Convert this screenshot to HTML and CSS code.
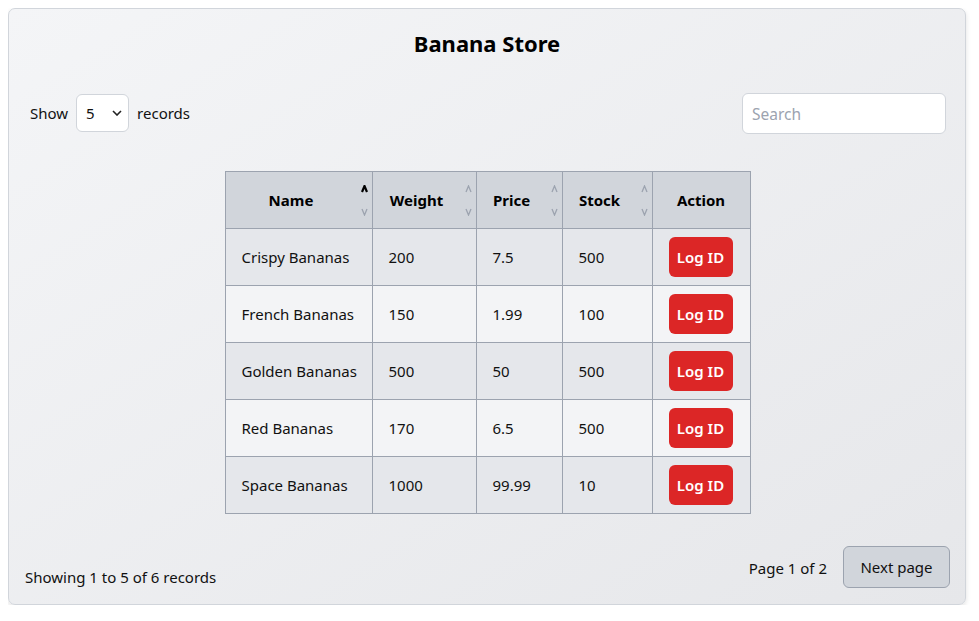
FILE: index.html
```html
<!DOCTYPE html>
<html lang="en">
<head>
<meta charset="utf-8">
<title>Banana Store</title>
<link rel="stylesheet" href="styles.css">
</head>
<body>
<div class="card">
  <h1 class="title">Banana Store</h1>
  <div class="controls">
    <label class="show">
      <span>Show</span>
      <select class="select">
        <option>5</option>
        <option>10</option>
      </select>
      <span>records</span>
    </label>
    <input class="search" type="text" placeholder="Search">
  </div>
  <div class="table-wrap">
  <table class="table">
    <colgroup>
      <col class="c-name"><col class="c-weight"><col class="c-price"><col class="c-stock"><col class="c-action">
    </colgroup>
    <thead>
      <tr>
        <th class="sortable">Name<span class="sort"><svg class="up active" viewBox="0 0 7 8"><polyline points="1,7 3.5,1 6,7"/></svg><svg class="down" viewBox="0 0 7 8"><polyline points="1,1 3.5,7 6,1"/></svg></span></th>
        <th class="sortable">Weight<span class="sort"><svg class="up" viewBox="0 0 7 8"><polyline points="1,7 3.5,1 6,7"/></svg><svg class="down" viewBox="0 0 7 8"><polyline points="1,1 3.5,7 6,1"/></svg></span></th>
        <th class="sortable">Price<span class="sort"><svg class="up" viewBox="0 0 7 8"><polyline points="1,7 3.5,1 6,7"/></svg><svg class="down" viewBox="0 0 7 8"><polyline points="1,1 3.5,7 6,1"/></svg></span></th>
        <th class="sortable">Stock<span class="sort"><svg class="up" viewBox="0 0 7 8"><polyline points="1,7 3.5,1 6,7"/></svg><svg class="down" viewBox="0 0 7 8"><polyline points="1,1 3.5,7 6,1"/></svg></span></th>
        <th>Action</th>
      </tr>
    </thead>
    <tbody>
      <tr><td>Crispy Bananas</td><td>200</td><td>7.5</td><td>500</td><td class="act"><button class="log">Log ID</button></td></tr>
      <tr><td>French Bananas</td><td>150</td><td>1.99</td><td>100</td><td class="act"><button class="log">Log ID</button></td></tr>
      <tr><td>Golden Bananas</td><td>500</td><td>50</td><td>500</td><td class="act"><button class="log">Log ID</button></td></tr>
      <tr><td>Red Bananas</td><td>170</td><td>6.5</td><td>500</td><td class="act"><button class="log">Log ID</button></td></tr>
      <tr><td>Space Bananas</td><td>1000</td><td>99.99</td><td>10</td><td class="act"><button class="log">Log ID</button></td></tr>
    </tbody>
  </table>
  </div>
  <div class="footer">
    <span class="showing">Showing 1 to 5 of 6 records</span>
    <div class="pager">
      <span class="page">Page 1 of 2</span>
      <button class="next">Next page</button>
    </div>
  </div>
</div>
</body>
</html>
```
FILE: styles.css
```css
* { box-sizing: border-box; }
body {
  margin: 8px;
  font-family: "Noto Sans", "Open Sans", sans-serif;
  font-size: 15px;
  line-height: 24px;
  color: #111;
  background: #fff;
}
.card {
  width: 958px;
  height: 597px;
  border: 1px solid #d1d5db;
  border-radius: 7px;
  background: linear-gradient(to bottom right, #f4f5f7, #e6e7ea);
  box-shadow: 0 2px 5px rgba(0,0,0,0.12);
  padding: 16px;
  display: flex;
  flex-direction: column;
}
.title {
  margin: 0;
  text-align: center;
  font-size: 22px;
  line-height: 36px;
  font-weight: 700;
  color: #000;
}
.controls {
  margin-top: 32px;
  padding: 0 3px 0 5px;
  display: flex;
  justify-content: space-between;
  align-items: flex-start;
}
.show {
  display: flex;
  align-items: center;
  gap: 8px;
  height: 40px;
}
.select {
  appearance: none;
  -webkit-appearance: none;
  width: 53px;
  height: 38px;
  border: 1px solid #d1d5db;
  border-radius: 6px;
  background: #fff url("data:image/svg+xml;utf8,<svg xmlns='http://www.w3.org/2000/svg' width='10' height='6' viewBox='0 0 10 6'><polyline points='1,1 5,5 9,1' fill='none' stroke='%23222' stroke-width='1.6'/></svg>") no-repeat right 6px center;
  padding: 0 0 0 9px;
  font: inherit;
  color: #111;
}
.search {
  width: 204px;
  height: 41px;
  border: 1px solid #d1d5db;
  border-radius: 6px;
  background: #fff;
  padding: 0 9px;
  font: inherit;
  font-size: 15.5px;
  color: #111;
}
.search::placeholder { color: #9ca3af; }
.table-wrap {
  margin-top: 37px;
  padding-left: 1px;
  display: flex;
  justify-content: center;
}
.table {
  border-collapse: collapse;
  table-layout: fixed;
  width: 525px;
}
.c-name { width: 147px; }
.c-weight { width: 104px; }
.c-price { width: 86px; }
.c-stock { width: 90px; }
.c-action { width: 98px; }
.table th, .table td {
  border: 1px solid #9ca3af;
  height: 57px;
  white-space: nowrap;
}
.table th {
  background: #d1d5db;
  font-weight: 700;
  text-align: center;
  padding: 0 16px;
  color: #000;
  position: relative;
}
.table th.sortable { padding-right: 31px; }
.sort {
  position: absolute;
  right: 4px;
  top: 13px;
  display: flex;
  flex-direction: column;
  gap: 15px;
}
.sort svg {
  width: 7px;
  height: 8px;
  display: block;
  fill: none;
  stroke: #9ca3af;
  stroke-width: 1.3;
}
.sort svg.active { stroke: #000; stroke-width: 2.2; }
.table td {
  padding: 0 16px;
  text-align: left;
}
.table tbody tr:nth-child(odd) td { background: #e5e7eb; }
.table tbody tr:nth-child(even) td { background: #f3f4f6; }
.log {
  width: 64px;
  height: 40px;
  border: none;
  border-radius: 6px;
  background: #dc2626;
  color: #fff;
  font: inherit;
  font-weight: 600;
  padding: 0;
  display: block;
}
.footer {
  margin-top: 32px;
  display: flex;
  justify-content: space-between;
  align-items: flex-end;
}
.showing { line-height: 24px; margin-bottom: -1px; }
.pager {
  display: flex;
  align-items: center;
  gap: 16px;
  margin-right: -1px;
}
.page { padding-top: 1px; }
.next {
  height: 42px;
  width: 107px;
  padding: 0;
  border: 1px solid #9ca3af;
  border-radius: 6px;
  background: #d1d5db;
  font: inherit;
  color: #111;
}
```
